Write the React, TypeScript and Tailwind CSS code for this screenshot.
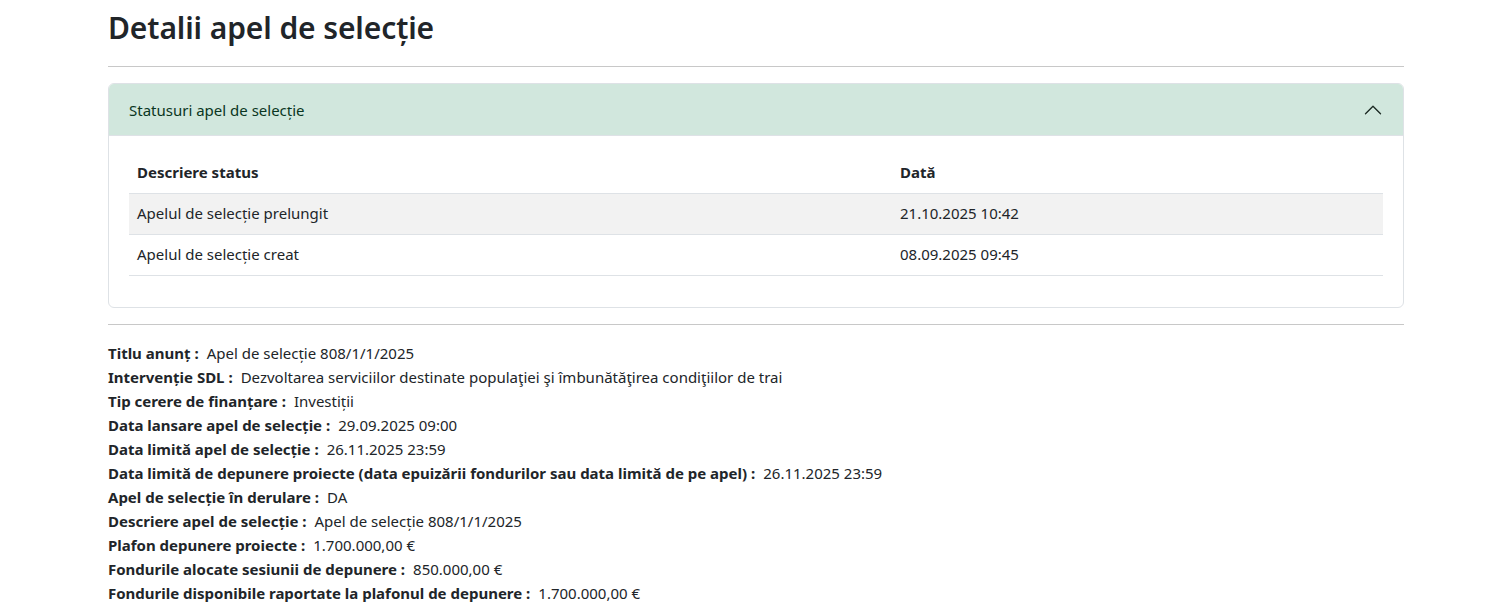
import React, { useState } from 'react';

type StatusRow = {
  descriere: string;
  data: string;
};

type InfoRow = {
  label: string;
  value: string;
};

const statusuri: StatusRow[] = [
  { descriere: 'Apelul de selecție prelungit', data: '21.10.2025 10:42' },
  { descriere: 'Apelul de selecție creat', data: '08.09.2025 09:45' },
];

const detalii: InfoRow[] = [
  { label: 'Titlu anunț', value: 'Apel de selecție 808/1/1/2025' },
  { label: 'Intervenție SDL', value: 'Dezvoltarea serviciilor destinate populaţiei şi îmbunătăţirea condiţiilor de trai' },
  { label: 'Tip cerere de finanțare', value: 'Investiții' },
  { label: 'Data lansare apel de selecție', value: '29.09.2025 09:00' },
  { label: 'Data limită apel de selecție', value: '26.11.2025 23:59' },
  { label: 'Data limită de depunere proiecte (data epuizării fondurilor sau data limită de pe apel)', value: '26.11.2025 23:59' },
  { label: 'Apel de selecție în derulare', value: 'DA' },
  { label: 'Descriere apel de selecție', value: 'Apel de selecție 808/1/1/2025' },
  { label: 'Plafon depunere proiecte', value: '1.700.000,00 €' },
  { label: 'Fondurile alocate sesiunii de depunere', value: '850.000,00 €' },
  { label: 'Fondurile disponibile raportate la plafonul de depunere', value: '1.700.000,00 €' },
];

const App = () => {
  const [open, setOpen] = useState(true);

  return (
    <div className="min-h-screen bg-white text-[#212529] font-['Noto_Sans',sans-serif]">
      <div className="mx-auto w-[1320px] px-3">
        <h2 className="pt-[9px] text-[30px] leading-[38px] font-semibold tracking-[-0.1px]">Detalii apel de selecție</h2>
        <hr className="mt-[19px] mb-4 border-t border-[#c8c8c8]" />

        <div className="rounded-md border border-[#dee2e6] overflow-hidden">
          <button
            onClick={() => setOpen(!open)}
            className="flex h-[52px] w-full items-center justify-between bg-[#d1e7dd] px-5 text-left text-[15px] text-[#0a3622] shadow-[inset_0_-1px_0_#dee2e6]"
          >
            <span>Statusuri apel de selecție</span>
            <svg
              width="20"
              height="20"
              viewBox="0 0 16 16"
              fill="none"
              className={open ? '' : 'rotate-180'}
            >
              <path d="M2 11 8 5l6 6" stroke="#1f2d27" strokeWidth="1.1" strokeLinecap="round" strokeLinejoin="round" />
            </svg>
          </button>

          {open && (
            <div className="px-5 pt-4 pb-[15px]">
              <table className="mb-4 w-full border-collapse text-[15px]">
                <thead>
                  <tr className="border-b border-[#dee2e6]">
                    <th className="w-[763px] h-[41px] px-2 text-left font-bold">Descriere status</th>
                    <th className="h-[41px] px-2 text-left font-bold">Dată</th>
                  </tr>
                </thead>
                <tbody>
                  {statusuri.map((s, i) => (
                    <tr key={s.data} className={`border-b border-[#dee2e6] ${i % 2 === 0 ? 'bg-[#f2f2f2]' : 'bg-white'}`}>
                      <td className="h-[41px] px-2">{s.descriere}</td>
                      <td className="h-[41px] px-2">{s.data}</td>
                    </tr>
                  ))}
                </tbody>
              </table>
            </div>
          )}
        </div>

        <hr className="my-4 border-t border-[#c8c8c8]" />

        <div className="text-[15px] leading-6">
          {detalii.map((d) => (
            <div key={d.label}>
              <span className="font-bold">{d.label} :</span>
              <span className="ml-2">{d.value}</span>
            </div>
          ))}
        </div>
      </div>
    </div>
  );
};

export default App;
